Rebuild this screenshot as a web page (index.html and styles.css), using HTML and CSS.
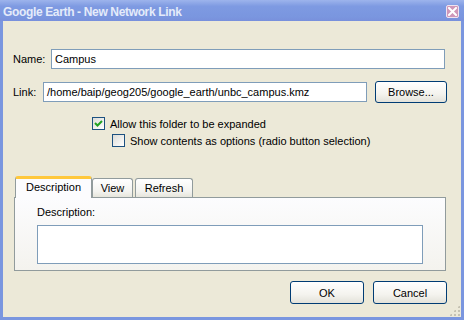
FILE: index.html
```html
<!DOCTYPE html>
<html lang="en">
<head>
    <meta name="viewport" content="width=device-width, initial-scale=1">
    <link rel="stylesheet" href="styles.css">
</head>
<body>

<div class="window">
    <!-- Title bar -->
    <div class="titlebar">
        <span class="title">Google Earth - New Network Link</span>
        <span class="closeBtn">
            <svg width="9" height="9" viewBox="0 0 9 9">
                <path d="M1 1 L8 8 M8 1 L1 8" stroke="#fff" stroke-width="2" stroke-linecap="square"/>
            </svg>
        </span>
    </div>

    <div class="dialog">
        <div class="row nameRow">
            <label class="lbl nameLbl">Name:</label>
            <div class="field">Campus</div>
        </div>

        <div class="row linkRow">
            <label class="lbl linkLbl">Link:</label>
            <div class="field">/home/baip/geog205/google_earth/unbc_campus.kmz</div>
            <span class="btn browseBtn">Browse...</span>
        </div>

        <div class="check check1">
            <span class="box">
                <svg width="9" height="9" viewBox="0 0 9 9">
                    <path d="M1 4 L3.5 6.5 L8 2" fill="none" stroke="#21a121" stroke-width="2"/>
                </svg>
            </span>
            <span>Allow this folder to be expanded</span>
        </div>
        <div class="check check2">
            <span class="box"></span>
            <span>Show contents as options (radio button selection)</span>
        </div>

        <!-- Tabs -->
        <div class="tabs">
            <span class="tab active">Description</span>
            <span class="tab tabView">View</span>
            <span class="tab tabRefresh">Refresh</span>
        </div>
        <div class="panel">
            <div class="panelLbl">Description:</div>
            <div class="area"></div>
        </div>

        <div class="buttons">
            <span class="btn">OK</span>
            <span class="btn">Cancel</span>
        </div>

        <div class="grip"></div>
    </div>
</div>

</body>
</html>
```

FILE: styles.css
```css
body {
    margin: 0;
    font-family: 'Liberation Sans', Arial, sans-serif;
    font-size: 11px;
    color: #000;
}

/* Window frame (inactive XP colours) */
.window {
    width: 464px;
    height: 320px;
    box-sizing: border-box;
    background: #7a96df;
    display: flex;
    flex-direction: column;
    padding: 0 3px 3px 3px;
}

.titlebar {
    height: 21px;
    display: flex;
    align-items: center;
    justify-content: space-between;
    background: linear-gradient(#9db4ec, #7e9ae2 30%, #7a96df 80%, #7890dc);
    margin: 0 -3px;
    padding: 0 5px 0 3px;
}

.title {
    color: #e4ebfa;
    font-family: 'Liberation Sans', Arial, sans-serif;
    font-weight: bold;
    font-size: 12px;
    letter-spacing: -0.35px;
    margin-top: 2px;
}

.closeBtn {
    width: 11px;
    height: 11px;
    border: 1px solid #efe3f0;
    border-radius: 2px;
    background: #cf97b9;
    display: flex;
    align-items: center;
    justify-content: center;
    margin-top: 2px;
}

/* Dialog body */
.dialog {
    flex: 1;
    position: relative;
    background: #ece9d8;
    padding: 28px 14px 0 10px;
}

.row {
    display: flex;
    align-items: center;
}

.nameRow {
    height: 20px;
    margin-right: 2px;
}

.linkRow {
    height: 22px;
    margin-top: 12px;
}

.nameLbl { width: 38px; }
.linkLbl { width: 30px; }

.field {
    flex: 1;
    height: 20px;
    box-sizing: border-box;
    border: 1px solid #7f9db9;
    background: #fff;
    padding: 0 3px;
    line-height: 18px;
    white-space: nowrap;
}

.btn {
    display: inline-flex;
    align-items: center;
    justify-content: center;
    width: 74px;
    height: 23px;
    box-sizing: border-box;
    border: 1px solid #003c74;
    border-radius: 3px;
    background: linear-gradient(#ffffff, #f4f3ee 60%, #e3e2da);
}

.browseBtn {
    width: 72px;
    height: 22px;
    margin-left: 8px;
}

/* Checkboxes */
.check {
    display: flex;
    align-items: center;
    height: 13px;
}

.check1 {
    margin-top: 14px;
    margin-left: 79px;
}

.check2 {
    margin-top: 4px;
    margin-left: 99px;
}

.box {
    width: 13px;
    height: 13px;
    box-sizing: border-box;
    border: 1px solid #1c5180;
    background: linear-gradient(135deg, #dcdcd7, #fff);
    margin-right: 5px;
    display: flex;
    align-items: center;
    justify-content: center;
}

/* Tabs */
.tabs {
    display: flex;
    align-items: flex-end;
    height: 21px;
    margin-top: 29px;
    margin-left: 2px;
    position: relative;
    z-index: 1;
}

.tab {
    height: 19px;
    box-sizing: border-box;
    border: 1px solid #919b9c;
    border-bottom: none;
    border-radius: 3px 3px 0 0;
    background: linear-gradient(#ffffff, #f3f3ef 70%, #e6e5dc);
    line-height: 18px;
    text-align: center;
}

.tabView {
    width: 41px;
}

.tabRefresh {
    width: 58px;
    margin-left: 2px;
}

.tab.active {
    height: 22px;
    width: 77px;
    margin-bottom: -1px;
    border-top: 3px solid #ffc83c;
    background: #fcfcfe;
    line-height: 17px;
}

.panel {
    height: 74px;
    box-sizing: border-box;
    margin: 0 1px 0 1px;
    border: 1px solid #919b9c;
    background: linear-gradient(#fcfcfe, #f4f3ee);
    padding: 8px 0 0 22px;
}

.panelLbl {
    height: 13px;
    line-height: 13px;
}

.area {
    width: 386px;
    height: 39px;
    box-sizing: border-box;
    margin-top: 6px;
    border: 1px solid #7f9db9;
    background: #fff;
}

.buttons {
    display: flex;
    justify-content: flex-end;
    gap: 9px;
    margin-top: 10px;
}

/* Resize grip in the corner */
.grip {
    position: absolute;
    right: 1px;
    bottom: 1px;
    width: 11px;
    height: 11px;
    background-image: radial-gradient(#c5c2b2 1px, transparent 1.2px);
    background-size: 4px 4px;
    clip-path: polygon(100% 0, 100% 100%, 0 100%);
}
```
